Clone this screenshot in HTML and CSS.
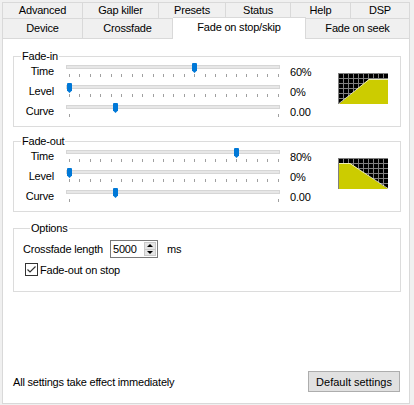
FILE: index.html
```html
<!DOCTYPE html>
<html lang="en">
<head>
  <meta charset="UTF-8" />
  <title>Crossfade - Fade on stop/skip</title>
  <link rel="stylesheet" href="styles.css">
</head>
<body>
  <div class="tabs">
    <div class="tab-row top">
      <div class="tab w80">Advanced</div>
      <div class="tab w76">Gap killer</div>
      <div class="tab w67">Presets</div>
      <div class="tab w65">Status</div>
      <div class="tab w60">Help</div>
      <div class="tab w59">DSP</div>
    </div>
    <div class="tab-row bottom">
      <div class="tab w80">Device</div>
      <div class="tab w90">Crossfade</div>
      <div class="tab w133 active">Fade on stop/skip</div>
      <div class="tab w104">Fade on seek</div>
    </div>
  </div>

  <div class="panel">
    <fieldset class="group">
      <legend>Fade-in</legend>
      <div class="fade">
        <div class="label">Time</div>
        <div class="slider" style="--v: 0.6">
          <div class="track"></div>
          <div class="ticks"><i></i><i></i><i></i><i></i><i></i><i></i><i></i><i></i><i></i><i></i><i></i><i></i><i></i><i></i><i></i><i></i><i></i><i></i><i></i><i></i><i></i></div>
          <svg class="thumb" width="5" height="10" viewBox="0 0 5 10"><path d="M0 1Q0 0 1 0H4Q5 0 5 1V7.5L2.5 10L0 7.5Z" fill="#0078d7"/></svg>
        </div>
        <div class="value">60%</div>
        <svg class="graph" width="50" height="31" viewBox="0 0 50 31">
          <defs>
            <pattern id="gridIn" width="5" height="5" patternUnits="userSpaceOnUse">
              <rect width="5" height="5" fill="#000"/>
              <path d="M0 0.5H5M0.5 0V5" stroke="#808080" stroke-width="1"/>
            </pattern>
          </defs>
          <rect width="50" height="31" fill="url(#gridIn)"/>
          <polygon points="1,31 31,6 50,6 50,31" fill="#cccc00"/>
          <polyline points="1,30.5 31,6.5 50,6.5" fill="none" stroke="#fff" stroke-opacity="0.7"/>
        </svg>

        <div class="label">Level</div>
        <div class="slider" style="--v: 0">
          <div class="track"></div>
          <div class="ticks"><i></i><i></i><i></i><i></i><i></i><i></i><i></i><i></i><i></i><i></i><i></i><i></i><i></i><i></i><i></i><i></i><i></i><i></i><i></i><i></i><i></i></div>
          <svg class="thumb" width="5" height="10" viewBox="0 0 5 10"><path d="M0 1Q0 0 1 0H4Q5 0 5 1V7.5L2.5 10L0 7.5Z" fill="#0078d7"/></svg>
        </div>
        <div class="value">0%</div>

        <div class="label">Curve</div>
        <div class="slider" style="--v: 0.22">
          <div class="track"></div>
          <div class="ticks"><i></i><i></i></div>
          <svg class="thumb" width="5" height="10" viewBox="0 0 5 10"><path d="M0 1Q0 0 1 0H4Q5 0 5 1V7.5L2.5 10L0 7.5Z" fill="#0078d7"/></svg>
        </div>
        <div class="value">0.00</div>
      </div>
    </fieldset>

    <fieldset class="group">
      <legend>Fade-out</legend>
      <div class="fade">
        <div class="label">Time</div>
        <div class="slider" style="--v: 0.8">
          <div class="track"></div>
          <div class="ticks"><i></i><i></i><i></i><i></i><i></i><i></i><i></i><i></i><i></i><i></i><i></i><i></i><i></i><i></i><i></i><i></i><i></i><i></i><i></i><i></i><i></i></div>
          <svg class="thumb" width="5" height="10" viewBox="0 0 5 10"><path d="M0 1Q0 0 1 0H4Q5 0 5 1V7.5L2.5 10L0 7.5Z" fill="#0078d7"/></svg>
        </div>
        <div class="value">80%</div>
        <svg class="graph" width="50" height="31" viewBox="0 0 50 31">
          <defs>
            <pattern id="gridOut" width="5" height="5" patternUnits="userSpaceOnUse">
              <rect width="5" height="5" fill="#000"/>
              <path d="M0 0.5H5M0.5 0V5" stroke="#808080" stroke-width="1"/>
            </pattern>
          </defs>
          <rect width="50" height="31" fill="url(#gridOut)"/>
          <polygon points="1,5 12,5 50,31 1,31" fill="#cccc00"/>
          <polyline points="1,5.5 12,5.5 50,30.5" fill="none" stroke="#fff" stroke-opacity="0.7"/>
        </svg>

        <div class="label">Level</div>
        <div class="slider" style="--v: 0">
          <div class="track"></div>
          <div class="ticks"><i></i><i></i><i></i><i></i><i></i><i></i><i></i><i></i><i></i><i></i><i></i><i></i><i></i><i></i><i></i><i></i><i></i><i></i><i></i><i></i><i></i></div>
          <svg class="thumb" width="5" height="10" viewBox="0 0 5 10"><path d="M0 1Q0 0 1 0H4Q5 0 5 1V7.5L2.5 10L0 7.5Z" fill="#0078d7"/></svg>
        </div>
        <div class="value">0%</div>

        <div class="label">Curve</div>
        <div class="slider" style="--v: 0.22">
          <div class="track"></div>
          <div class="ticks"><i></i><i></i></div>
          <svg class="thumb" width="5" height="10" viewBox="0 0 5 10"><path d="M0 1Q0 0 1 0H4Q5 0 5 1V7.5L2.5 10L0 7.5Z" fill="#0078d7"/></svg>
        </div>
        <div class="value">0.00</div>
      </div>
    </fieldset>

    <fieldset class="group options">
      <legend>Options</legend>
      <div class="opt-row">
        <span>Crossfade length</span>
        <div class="spin">
          <span class="num">5000</span>
          <div class="arrows">
            <span class="up"></span>
            <span class="down"></span>
          </div>
        </div>
        <span>ms</span>
      </div>
      <label class="check-row">
        <svg class="checkbox" width="13" height="13" viewBox="0 0 13 13">
          <rect x="0.5" y="0.5" width="12" height="12" fill="#fff" stroke="#333"/>
          <polyline points="2.5,6.5 5,9 10.5,3.5" fill="none" stroke="#333" stroke-width="1.2"/>
        </svg>
        <span>Fade-out on stop</span>
      </label>
    </fieldset>

    <div class="footer">
      <span>All settings take effect immediately</span>
      <button class="btn">Default settings</button>
    </div>
  </div>
</body>
</html>
```

FILE: styles.css
```css
* {margin: 0; padding: 0; box-sizing: border-box;}
body {
  font-family: "Liberation Sans", Arial, sans-serif;
  font-size: 11px;
  letter-spacing: -0.2px;
  background: #f0f0f0;
  color: #000;
  width: 414px;
  height: 405px;
  overflow: hidden;
  padding: 2px 0 0 2px;
}

/* tabs */
.tabs {width: 408px;}
.tab-row {
  display: flex;
  border-left: 1px solid #d9d9d9;
}
.tab {
  border-right: 1px solid #d9d9d9;
  text-align: center;
  white-space: nowrap;
  background: #f0f0f0;
}
.tab-row.top .tab {
  height: 17px;
  line-height: 15px;
  border-top: 1px solid #d9d9d9;
  border-bottom: 1px solid #d9d9d9;
}
.tab-row.bottom {height: 19px;}
.tab-row.bottom .tab {line-height: 19px;}
.tab-row.bottom .tab.active {
  position: relative;
  z-index: 1;
  height: 22px;
  margin-top: -2px;
  border-top: 1px solid #d9d9d9;
  background: #fff;
  line-height: 19px;
}
.w59 {width: 59px;}
.w60 {width: 60px;}
.w65 {width: 65px;}
.w67 {width: 67px;}
.w76 {width: 76px;}
.w80 {width: 80px;}
.w90 {width: 90px;}
.w104 {width: 104px;}
.w133 {width: 133px;}

/* panel */
.panel {
  width: 408px;
  height: 366px;
  border: 1px solid #d9d9d9;
  background: #fff;
  padding: 11px 8px 0 10px;
  display: flex;
  flex-direction: column;
}
.group {
  border: 1px solid #dcdcdc;
  padding: 0 0 4px 0;
  min-width: 0;
}
.group legend {
  margin-left: 7px;
  padding: 0 1px;
  line-height: 12px;
}
.group + .group {margin-top: 8px;}
.group.options {margin-top: 10px;}

/* fade rows */
.fade {
  display: grid;
  grid-template-columns: 52px 224px 48px 50px;
  grid-auto-rows: 20px;
}
.fade .label {
  text-align: right;
  padding-right: 12px;
  line-height: 19px;
}
.fade .value {line-height: 20px;}
.slider {
  position: relative;
  width: 214px;
}
.track {
  margin-top: 3px;
  height: 4px;
  background: #e7e7e7;
  border: 1px solid #d6d6d6;
}
.ticks {
  display: flex;
  justify-content: space-between;
  width: 210px;
  margin: 5px 0 0 3px;
}
.ticks i {
  display: block;
  width: 1px;
  height: 3px;
  background: #a0a0a0;
}
.thumb {
  position: absolute;
  top: 1px;
  left: calc(3px + var(--v) * 209px - 2px);
}
.graph {
  grid-column: 4;
  grid-row: 1 / span 3;
  margin-top: 11px;
  display: block;
}

/* options */
.options {padding: 0 0 15px 9px;}
.opt-row {
  display: flex;
  align-items: center;
  height: 18px;
  margin-top: 6px;
}
.spin {
  display: flex;
  width: 48px;
  height: 18px;
  margin: 0 9px 0 7px;
  border: 1px solid #7a7a7a;
  background: #fff;
}
.spin .num {
  flex: 1;
  padding-left: 2px;
  line-height: 16px;
}
.spin .arrows {
  display: flex;
  flex-direction: column;
  width: 12px;
  margin: 1px 1px 1px 0;
}
.spin .up, .spin .down {
  flex: 1;
  display: flex;
  align-items: center;
  justify-content: center;
  background: #e5e5e5;
  border: 1px solid #c9c9c9;
}
.spin .down {border-top: none;}
.spin .up::after {
  content: "";
  border: 3px solid transparent;
  border-top: none;
  border-bottom: 3px solid #000;
}
.spin .down::after {
  content: "";
  border: 3px solid transparent;
  border-bottom: none;
  border-top: 3px solid #000;
}
.check-row {
  display: flex;
  align-items: center;
  gap: 2px;
  margin-top: 5px;
  height: 13px;
}
.checkbox {
  display: block;
  margin-left: 2px;
}

/* footer */
.footer {
  margin-top: auto;
  display: flex;
  align-items: center;
  justify-content: space-between;
  padding: 0 1px 11px 0;
}
.btn {
  font: inherit;
  color: #000;
  width: 92px;
  height: 21px;
  background: #e1e1e1;
  border: 1px solid #adadad;
}
```
